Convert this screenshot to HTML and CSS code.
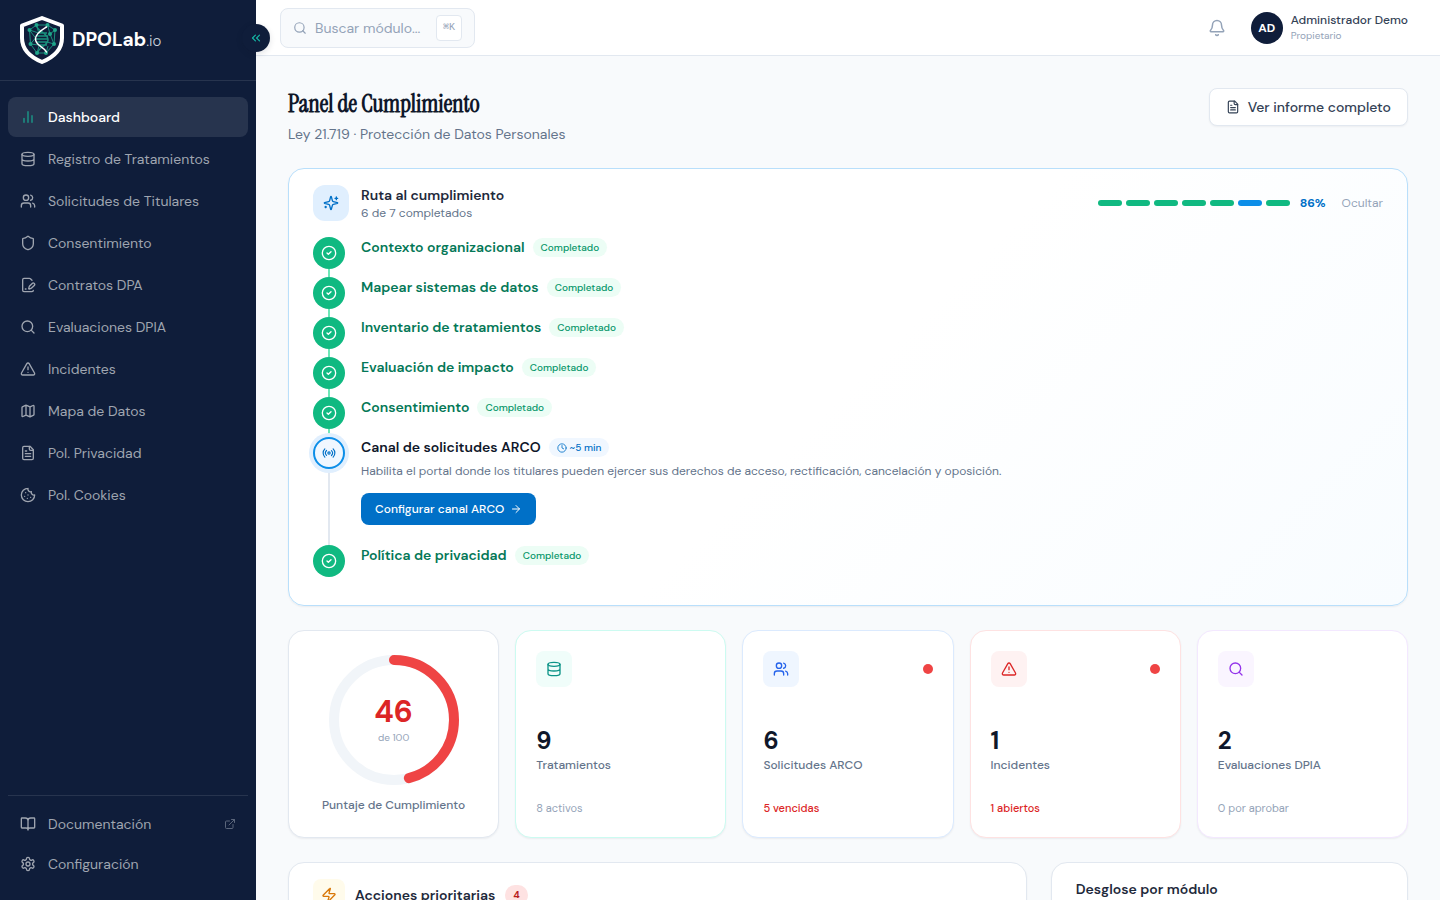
FILE: index.html
```html
<!doctype html>
<html lang="es">
<head>
    <meta charset="UTF-8">
    <meta name="viewport" content="width=device-width, initial-scale=1">
    <title>DPOLab.io - Panel de Cumplimiento</title>
    <link rel="stylesheet" href="styles.css">
</head>
<body>
<!-- icon sprite -->
<svg class="sprite" aria-hidden="true">
    <symbol id="i-chart" viewBox="0 0 24 24"><path d="M18 20V10M12 20V4M6 20v-6"/></symbol>
    <symbol id="i-database" viewBox="0 0 24 24"><ellipse cx="12" cy="5" rx="9" ry="3"/><path d="M3 5v14a9 3 0 0 0 18 0V5M3 12a9 3 0 0 0 18 0"/></symbol>
    <symbol id="i-users" viewBox="0 0 24 24"><path d="M16 21v-2a4 4 0 0 0-4-4H6a4 4 0 0 0-4 4v2"/><circle cx="9" cy="7" r="4"/><path d="M22 21v-2a4 4 0 0 0-3-3.87M16 3.13a4 4 0 0 1 0 7.75"/></symbol>
    <symbol id="i-shield" viewBox="0 0 24 24"><path d="M20 13c0 5-3.5 7.5-7.66 8.95a1 1 0 0 1-.67-.01C7.5 20.5 4 18 4 13V6a1 1 0 0 1 1-1c2 0 4.5-1.2 6.24-2.72a1.17 1.17 0 0 1 1.52 0C14.51 3.81 17 5 19 5a1 1 0 0 1 1 1z"/></symbol>
    <symbol id="i-file-pen" viewBox="0 0 24 24"><path d="m18 5-2.414-2.414A2 2 0 0 0 14.172 2H6a2 2 0 0 0-2 2v16a2 2 0 0 0 2 2h12a2 2 0 0 0 2-2"/><path d="M21.378 12.626a1 1 0 0 0-3.004-3.004l-4.01 4.012a2 2 0 0 0-.506.854l-.837 2.87a.5.5 0 0 0 .62.62l2.87-.837a2 2 0 0 0 .854-.506z"/><path d="M8 18h1"/></symbol>
    <symbol id="i-search" viewBox="0 0 24 24"><circle cx="11" cy="11" r="8"/><path d="m21 21-4.3-4.3"/></symbol>
    <symbol id="i-alert" viewBox="0 0 24 24"><path d="m21.73 18-8-14a2 2 0 0 0-3.48 0l-8 14A2 2 0 0 0 4 21h16a2 2 0 0 0 1.73-3M12 9v4M12 17h.01"/></symbol>
    <symbol id="i-map" viewBox="0 0 24 24"><path d="M14.106 5.553a2 2 0 0 0 1.788 0l3.659-1.83A1 1 0 0 1 21 4.619v12.764a1 1 0 0 1-.553.894l-4.553 2.277a2 2 0 0 1-1.788 0l-4.212-2.106a2 2 0 0 0-1.788 0l-3.659 1.83A1 1 0 0 1 3 19.381V6.618a1 1 0 0 1 .553-.894l4.553-2.277a2 2 0 0 1 1.788 0zM15 5.764v15M9 3.236v15"/></symbol>
    <symbol id="i-file" viewBox="0 0 24 24"><path d="M15 2H6a2 2 0 0 0-2 2v16a2 2 0 0 0 2 2h12a2 2 0 0 0 2-2V7Z"/><path d="M14 2v4a2 2 0 0 0 2 2h4M10 9H8M16 13H8M16 17H8"/></symbol>
    <symbol id="i-cookie" viewBox="0 0 24 24"><path d="M12 2a10 10 0 1 0 10 10 4 4 0 0 1-5-5 4 4 0 0 1-5-5M8.5 8.5v.01M16 15.5v.01M12 12v.01M11 17v.01M7 14v.01"/></symbol>
    <symbol id="i-book" viewBox="0 0 24 24"><path d="M12 7v14M3 18a1 1 0 0 1-1-1V4a1 1 0 0 1 1-1h5a4 4 0 0 1 4 4 4 4 0 0 1 4-4h5a1 1 0 0 1 1 1v13a1 1 0 0 1-1 1h-6a3 3 0 0 0-3 3 3 3 0 0 0-3-3z"/></symbol>
    <symbol id="i-settings" viewBox="0 0 24 24"><path d="M12.22 2h-.44a2 2 0 0 0-2 2v.18a2 2 0 0 1-1 1.73l-.43.25a2 2 0 0 1-2 0l-.15-.08a2 2 0 0 0-2.73.73l-.22.38a2 2 0 0 0 .73 2.73l.15.1a2 2 0 0 1 1 1.72v.51a2 2 0 0 1-1 1.74l-.15.09a2 2 0 0 0-.73 2.73l.22.38a2 2 0 0 0 2.73.73l.15-.08a2 2 0 0 1 2 0l.43.25a2 2 0 0 1 1 1.73V20a2 2 0 0 0 2 2h.44a2 2 0 0 0 2-2v-.18a2 2 0 0 1 1-1.73l.43-.25a2 2 0 0 1 2 0l.15.08a2 2 0 0 0 2.73-.73l.22-.39a2 2 0 0 0-.73-2.73l-.15-.08a2 2 0 0 1-1-1.74v-.5a2 2 0 0 1 1-1.74l.15-.09a2 2 0 0 0 .73-2.73l-.22-.38a2 2 0 0 0-2.73-.73l-.15.08a2 2 0 0 1-2 0l-.43-.25a2 2 0 0 1-1-1.73V4a2 2 0 0 0-2-2z"/><circle cx="12" cy="12" r="3"/></symbol>
    <symbol id="i-external" viewBox="0 0 24 24"><path d="M15 3h6v6M10 14 21 3M18 13v6a2 2 0 0 1-2 2H5a2 2 0 0 1-2-2V8a2 2 0 0 1 2-2h6"/></symbol>
    <symbol id="i-chevrons" viewBox="0 0 24 24"><path d="m11 17-5-5 5-5M18 17l-5-5 5-5"/></symbol>
    <symbol id="i-bell" viewBox="0 0 24 24"><path d="M10.268 21a2 2 0 0 0 3.464 0M3.262 15.326A1 1 0 0 0 4 17h16a1 1 0 0 0 .74-1.673C19.41 13.956 18 12.499 18 8A6 6 0 0 0 6 8c0 4.499-1.411 5.956-2.738 7.326"/></symbol>
    <symbol id="i-sparkles" viewBox="0 0 24 24"><path d="M9.937 15.5A2 2 0 0 0 8.5 14.063l-6.135-1.582a.5.5 0 0 1 0-.962L8.5 9.936A2 2 0 0 0 9.937 8.5l1.582-6.135a.5.5 0 0 1 .963 0L14.063 8.5A2 2 0 0 0 15.5 9.937l6.135 1.581a.5.5 0 0 1 0 .964L15.5 14.063a2 2 0 0 0-1.437 1.437l-1.582 6.135a.5.5 0 0 1-.963 0z"/><path d="M20 3v4M22 5h-4M4 17v2M5 18H3"/></symbol>
    <symbol id="i-check" viewBox="0 0 24 24"><circle cx="12" cy="12" r="10"/><path d="m9 12 2 2 4-4"/></symbol>
    <symbol id="i-radio" viewBox="0 0 24 24"><path d="M4.9 19.1C1 15.2 1 8.8 4.9 4.9M7.8 16.2c-2.3-2.3-2.3-6.1 0-8.5M16.2 7.8c2.3 2.3 2.3 6.1 0 8.5M19.1 4.9C23 8.8 23 15.1 19.1 19"/><circle cx="12" cy="12" r="2"/></symbol>
    <symbol id="i-clock" viewBox="0 0 24 24"><circle cx="12" cy="12" r="10"/><path d="M12 6v6l4 2"/></symbol>
    <symbol id="i-arrow" viewBox="0 0 24 24"><path d="M5 12h14M12 5l7 7-7 7"/></symbol>
    <symbol id="i-zap" viewBox="0 0 24 24"><path d="M4 14a1 1 0 0 1-.78-1.63l9.9-10.2a.5.5 0 0 1 .86.46l-1.92 6.02A1 1 0 0 0 13 10h7a1 1 0 0 1 .78 1.63l-9.9 10.2a.5.5 0 0 1-.86-.46l1.92-6.02A1 1 0 0 0 11 14z"/></symbol>
</svg>

<aside class="sidebar">
    <a class="brand" href="#">
        <svg class="brand-mark" viewBox="0 0 44 48">
            <path class="mark-shield" d="M22 2 42 9.500V22c0 11-8 19-20 24C10 41 2 33 2 22V9.500z"/>
            <g class="mark-net">
                <path d="M16.500 9h11L35 14l-1 14-8 9h-9l-6.500-9-1-14zM9.500 14l9 3M16.500 9l2 7M27.500 9l2.500 9 5-4M30 18l4 10M9.500 14l6 8-5 6 8 1M34 28l-7-2M17 37l2-7M26 37l2-7"/>
                <path class="mark-rungs" d="M17 11c1 4 10 6 11 12s-9 8-10 13M19 17h8M17 20h11M16 23h12M17 26h11M19 29h8"/>
            </g>
            <g class="mark-dots">
                <circle cx="16.500" cy="9" r="2"/><circle cx="27.500" cy="9" r="2"/><circle cx="9.500" cy="14" r="2"/><circle cx="35" cy="14" r="2"/>
                <circle cx="10.500" cy="28" r="2"/><circle cx="34" cy="28" r="2"/><circle cx="17" cy="37" r="2"/><circle cx="26" cy="37" r="2"/><circle cx="30" cy="18" r="2"/>
            </g>
            <path class="mark-helix" d="M26.500 11c-4 2.500-11 6-11 12 0 7 8 7 11 13"/>
        </svg>
        <span class="brand-name">DPOLab<span class="brand-tld">.io</span></span>
    </a>
    <nav class="nav">
        <a class="nav-item active" href="#"><svg class="icon"><use href="#i-chart"/></svg>Dashboard</a>
        <a class="nav-item" href="#"><svg class="icon"><use href="#i-database"/></svg>Registro de Tratamientos</a>
        <a class="nav-item" href="#"><svg class="icon"><use href="#i-users"/></svg>Solicitudes de Titulares</a>
        <a class="nav-item" href="#"><svg class="icon"><use href="#i-shield"/></svg>Consentimiento</a>
        <a class="nav-item" href="#"><svg class="icon"><use href="#i-file-pen"/></svg>Contratos DPA</a>
        <a class="nav-item" href="#"><svg class="icon"><use href="#i-search"/></svg>Evaluaciones DPIA</a>
        <a class="nav-item" href="#"><svg class="icon"><use href="#i-alert"/></svg>Incidentes</a>
        <a class="nav-item" href="#"><svg class="icon"><use href="#i-map"/></svg>Mapa de Datos</a>
        <a class="nav-item" href="#"><svg class="icon"><use href="#i-file"/></svg>Pol. Privacidad</a>
        <a class="nav-item" href="#"><svg class="icon"><use href="#i-cookie"/></svg>Pol. Cookies</a>
    </nav>
    <div class="nav-bottom">
        <a class="nav-item" href="#"><svg class="icon"><use href="#i-book"/></svg>Documentación<svg class="icon icon-12 nav-ext"><use href="#i-external"/></svg></a>
        <a class="nav-item" href="#"><svg class="icon"><use href="#i-settings"/></svg>Configuración</a>
    </div>
    <button class="collapse" type="button" aria-label="Contraer menú"><svg class="icon icon-14"><use href="#i-chevrons"/></svg></button>
</aside>

<div class="page">
    <header class="topbar">
        <label class="search">
            <svg class="icon icon-14"><use href="#i-search"/></svg>
            <input type="text" placeholder="Buscar módulo..." aria-label="Buscar módulo">
            <kbd>⌘K</kbd>
        </label>
        <div class="topbar-right">
            <button class="bell" type="button" aria-label="Notificaciones"><svg class="icon icon-18"><use href="#i-bell"/></svg></button>
            <button class="user" type="button">
                <span class="avatar">AD</span>
                <span class="user-text">
                    <span class="user-name">Administrador Demo</span>
                    <span class="user-role">Propietario</span>
                </span>
            </button>
        </div>
    </header>

    <main class="content">
        <div class="page-head">
            <div>
                <h1>Panel de Cumplimiento</h1>
                <p class="subtitle">Ley 21.719 · Protección de Datos Personales</p>
            </div>
            <button class="btn-report" type="button"><svg class="icon icon-14"><use href="#i-file"/></svg>Ver informe completo</button>
        </div>

        <section class="card journey">
            <div class="journey-head">
                <span class="tile tile-sky"><svg class="icon"><use href="#i-sparkles"/></svg></span>
                <div class="journey-title">
                    <h2>Ruta al cumplimiento</h2>
                    <p>6 de 7 completados</p>
                </div>
                <div class="segments">
                    <i></i><i></i><i></i><i></i><i></i><i class="current"></i><i></i>
                </div>
                <span class="percent">86%</span>
                <button class="hide" type="button">Ocultar</button>
            </div>
            <ol class="steps">
                <li class="step"><span class="dot"><svg class="icon"><use href="#i-check"/></svg></span><div class="step-row"><h3>Contexto organizacional</h3><span class="badge">Completado</span></div></li>
                <li class="step"><span class="dot"><svg class="icon"><use href="#i-check"/></svg></span><div class="step-row"><h3>Mapear sistemas de datos</h3><span class="badge">Completado</span></div></li>
                <li class="step"><span class="dot"><svg class="icon"><use href="#i-check"/></svg></span><div class="step-row"><h3>Inventario de tratamientos</h3><span class="badge">Completado</span></div></li>
                <li class="step"><span class="dot"><svg class="icon"><use href="#i-check"/></svg></span><div class="step-row"><h3>Evaluación de impacto</h3><span class="badge">Completado</span></div></li>
                <li class="step"><span class="dot"><svg class="icon"><use href="#i-check"/></svg></span><div class="step-row"><h3>Consentimiento</h3><span class="badge">Completado</span></div></li>
                <li class="step current">
                    <span class="dot"><svg class="icon icon-14"><use href="#i-radio"/></svg></span>
                    <div class="step-body">
                        <div class="step-row"><h3>Canal de solicitudes ARCO</h3><span class="badge badge-time"><svg class="icon icon-10"><use href="#i-clock"/></svg>~5 min</span></div>
                        <p class="step-desc">Habilita el portal donde los titulares pueden ejercer sus derechos de acceso, rectificación, cancelación y oposición.</p>
                        <button class="btn-primary" type="button">Configurar canal ARCO<svg class="icon icon-12"><use href="#i-arrow"/></svg></button>
                    </div>
                </li>
                <li class="step"><span class="dot"><svg class="icon"><use href="#i-check"/></svg></span><div class="step-row"><h3>Política de privacidad</h3><span class="badge">Completado</span></div></li>
            </ol>
        </section>

        <section class="stats">
            <div class="card score">
                <div class="ring">
                    <svg viewBox="0 0 130 130">
                        <circle class="ring-track" cx="65" cy="65" r="60"/>
                        <circle class="ring-value" cx="65" cy="65" r="60" pathLength="100" stroke-dasharray="46 100"/>
                    </svg>
                    <div class="ring-text"><strong>46</strong><span>de 100</span></div>
                </div>
                <p class="stat-label">Puntaje de Cumplimiento</p>
            </div>
            <a class="card stat stat-teal" href="#">
                <span class="stat-top"><span class="tile"><svg class="icon"><use href="#i-database"/></svg></span></span>
                <strong>9</strong>
                <span class="stat-label">Tratamientos</span>
                <span class="stat-note">8 activos</span>
            </a>
            <a class="card stat stat-blue" href="#">
                <span class="stat-top"><span class="tile"><svg class="icon"><use href="#i-users"/></svg></span><i class="alert-dot"></i></span>
                <strong>6</strong>
                <span class="stat-label">Solicitudes ARCO</span>
                <span class="stat-note urgent">5 vencidas</span>
            </a>
            <a class="card stat stat-red" href="#">
                <span class="stat-top"><span class="tile"><svg class="icon"><use href="#i-alert"/></svg></span><i class="alert-dot"></i></span>
                <strong>1</strong>
                <span class="stat-label">Incidentes</span>
                <span class="stat-note urgent">1 abiertos</span>
            </a>
            <a class="card stat stat-purple" href="#">
                <span class="stat-top"><span class="tile"><svg class="icon"><use href="#i-search"/></svg></span></span>
                <strong>2</strong>
                <span class="stat-label">Evaluaciones DPIA</span>
                <span class="stat-note">0 por aprobar</span>
            </a>
        </section>

        <div class="bottom">
            <section class="card panel panel-actions">
                <span class="tile tile-amber"><svg class="icon"><use href="#i-zap"/></svg></span>
                <h2>Acciones prioritarias</h2>
                <span class="count">4</span>
            </section>
            <section class="card panel">
                <h2>Desglose por módulo</h2>
            </section>
        </div>
    </main>
</div>
</body>
</html>
```

FILE: styles.css
```css
* {
    box-sizing: border-box;
}
body {
    margin: 0;
    display: flex;
    height: 100vh;
    overflow: hidden;
    background: #f8fafc;
    color: #0f172a;
    font-family: "DM Sans", Inter, "Liberation Sans", sans-serif;
    font-size: 14px;
    line-height: 20px;
}
h1, h2, h3, p, ol {
    margin: 0;
    padding: 0;
}
a {
    color: inherit;
    text-decoration: none;
}
button {
    font: inherit;
    border: 0;
    padding: 0;
    background: none;
    cursor: pointer;
}
.sprite {
    position: absolute;
    width: 0;
    height: 0;
}
.icon {
    width: 16px;
    height: 16px;
    flex: none;
    fill: none;
    stroke: currentColor;
    stroke-width: 2;
    stroke-linecap: round;
    stroke-linejoin: round;
}
.icon-10 { width: 10px; height: 10px; }
.icon-12 { width: 12px; height: 12px; }
.icon-14 { width: 14px; height: 14px; }
.icon-18 { width: 18px; height: 18px; }

/* sidebar */
.sidebar {
    position: relative;
    z-index: 2;
    display: flex;
    flex-direction: column;
    flex: none;
    width: 256px;
    background: #0f1d3a;
}
.brand {
    display: flex;
    align-items: center;
    gap: 8px;
    height: 81px;
    padding: 0 20px;
    border-bottom: 1px solid #27344e;
    color: #fff;
}
.brand-mark {
    width: 44px;
    height: 48px;
    fill: none;
}
.mark-shield {
    fill: #0f1d3a;
    stroke: #fff;
    stroke-width: 4;
    stroke-linejoin: round;
}
.mark-net {
    stroke: #1a8f7c;
    stroke-width: 1;
}
.mark-rungs {
    stroke-width: 1.5;
}
.mark-dots {
    fill: #1fa58a;
}
.mark-helix {
    stroke: #fff;
    stroke-width: 1.5;
    stroke-linecap: round;
}
.brand-name {
    font-size: 19px;
    font-weight: 700;
}
.brand-tld {
    font-size: 15px;
    font-weight: 300;
    color: #cbd2dd;
}
.nav {
    flex: 1;
    display: flex;
    flex-direction: column;
    gap: 2px;
    padding: 16px 8px;
}
.nav-item {
    display: flex;
    align-items: center;
    gap: 12px;
    height: 40px;
    padding: 0 12px;
    border-radius: 8px;
    color: #9fa5b0;
}
.nav-item.active {
    background: #27344e;
    color: #fff;
    font-weight: 500;
}
.nav-item.active .icon {
    color: #1a9e8c;
}
.nav-bottom {
    margin: 0 8px;
    padding: 8px 0 16px;
    border-top: 1px solid #27344e;
}
.nav-ext {
    margin-left: auto;
    color: #5b667b;
}
.collapse {
    position: absolute;
    top: 24px;
    right: -14px;
    display: flex;
    align-items: center;
    justify-content: center;
    width: 28px;
    height: 28px;
    border-radius: 50%;
    background: #0f1d3a;
    color: #14b8a6;
    box-shadow: 0 2px 6px rgba(15, 23, 42, .12);
}

/* top bar */
.page {
    flex: 1;
    min-width: 0;
    display: flex;
    flex-direction: column;
}
.topbar {
    display: flex;
    align-items: center;
    justify-content: space-between;
    flex: none;
    height: 56px;
    padding: 0 32px 0 24px;
    background: #fff;
    border-bottom: 1px solid #e2e8f0;
}
.search {
    display: flex;
    align-items: center;
    gap: 8px;
    width: 195px;
    height: 40px;
    padding: 0 12px;
    border: 1px solid #e2e8f0;
    border-radius: 8px;
    background: #f8fafc;
    color: #94a3b8;
}
.search input {
    flex: 1;
    min-width: 0;
    padding: 0;
    border: 0;
    outline: 0;
    background: none;
    font: inherit;
}
.search input::placeholder {
    color: #94a3b8;
}
kbd {
    width: 26px;
    border: 1px solid #e2e8f0;
    border-radius: 4px;
    background: #fff;
    font: 10px/24px "Liberation Mono", monospace;
    text-align: center;
}
.topbar-right {
    display: flex;
    align-items: center;
    gap: 25px;
}
.bell {
    display: flex;
    color: #94a3b8;
}
.user {
    display: flex;
    align-items: center;
    gap: 8px;
    text-align: left;
}
.avatar {
    width: 32px;
    border-radius: 50%;
    background: #0f1d3a;
    color: #fff;
    font-size: 12px;
    font-weight: 700;
    line-height: 32px;
    text-align: center;
}
.user-text {
    display: flex;
    flex-direction: column;
}
.user-name {
    color: #334155;
    font-size: 12px;
    font-weight: 500;
    line-height: 16px;
}
.user-role {
    color: #94a3b8;
    font-size: 10px;
    line-height: 16px;
}

/* content */
.content {
    flex: 1;
    display: flex;
    flex-direction: column;
    gap: 24px;
    padding: 32px;
    overflow-y: auto;
    scrollbar-width: none;
}
.content > * {
    flex: none;
}
.page-head {
    display: flex;
    align-items: flex-start;
    justify-content: space-between;
}
h1 {
    font-family: "Instrument Serif", "Liberation Serif", serif;
    font-size: 24px;
    line-height: 32px;
}
.subtitle {
    margin-top: 4px;
    color: #64748b;
}
.btn-report {
    display: flex;
    align-items: center;
    gap: 8px;
    height: 38px;
    padding: 0 16px;
    border: 1px solid #e2e8f0;
    border-radius: 8px;
    background: #fff;
    color: #334155;
    font-weight: 500;
    box-shadow: 0 1px 2px rgba(15, 23, 42, .05);
}
.card {
    border: 1px solid #e2e8f0;
    border-radius: 16px;
    background: #fff;
    box-shadow: 0 1px 2px rgba(15, 23, 42, .06);
}
h2, h3 {
    font-size: 14px;
    font-weight: 600;
    line-height: 20px;
}
h2 {
    color: #1e293b;
}
.tile {
    display: flex;
    align-items: center;
    justify-content: center;
    width: 36px;
    height: 36px;
    border-radius: 8px;
}

/* journey */
.journey {
    padding: 16px 24px 20px;
    border-color: #b9dffb;
    background: linear-gradient(135deg, #fff 50%, #f8fcff);
}
.journey-head {
    display: flex;
    align-items: center;
    margin-bottom: 16px;
}
.tile-sky {
    border-radius: 12px;
    background: #e0effe;
    color: #0070c7;
}
.journey-title {
    flex: 1;
    margin-left: 12px;
}
.journey-title p {
    color: #64748b;
    font-size: 12px;
    line-height: 16px;
}
.segments {
    display: flex;
    gap: 4px;
    margin-right: 10px;
}
.segments i {
    width: 24px;
    height: 6px;
    border-radius: 3px;
    background: #10b981;
}
.segments .current {
    background: #0c8ee8;
}
.percent {
    color: #0070c7;
    font-size: 12px;
    font-weight: 700;
}
.hide {
    margin-left: 16px;
    color: #94a3b8;
    font-size: 12px;
}
.steps {
    list-style: none;
}
.step {
    position: relative;
    display: flex;
    align-items: flex-start;
    gap: 16px;
    min-height: 40px;
}
/* connector down to the next step */
.step:not(:last-child)::before {
    content: "";
    position: absolute;
    top: 32px;
    bottom: 0;
    left: 15px;
    width: 2px;
    background: #6ee7b7;
}
.step.current::before {
    background: #e2e8f0 !important;
}
.dot {
    position: relative;
    display: flex;
    align-items: center;
    justify-content: center;
    flex: none;
    width: 32px;
    height: 32px;
    border-radius: 50%;
    background: #10b981;
    color: #fff;
}
.current .dot {
    border: 2px solid #0c8ee8;
    background: #f0f7ff;
    color: #0070c7;
    box-shadow: 0 0 0 4px #e0effe;
}
.step-row {
    display: flex;
    align-items: flex-end;
    gap: 8px;
    height: 20px;
}
h3 {
    color: #047857;
}
.current h3 {
    color: #0f172a;
}
.badge {
    display: flex;
    align-items: center;
    gap: 3px;
    height: 19px;
    padding: 0 8px;
    border-radius: 10px;
    background: #ecfdf5;
    color: #059669;
    font-size: 10px;
    font-weight: 500;
}
.badge-time {
    background: #f0f7ff;
    color: #0070c7;
}
.step-body {
    padding-bottom: 20px;
}
.step-desc {
    margin: 4px 0 12px;
    color: #64748b;
    font-size: 12px;
}
.btn-primary {
    display: flex;
    align-items: center;
    gap: 6px;
    height: 32px;
    padding: 0 14px;
    border-radius: 8px;
    background: #0070c7;
    color: #fff;
    font-size: 12px;
    font-weight: 500;
}

/* stats */
.stats {
    display: grid;
    grid-template-columns: repeat(5, 1fr);
    gap: 16px;
}
.score {
    display: flex;
    flex-direction: column;
    align-items: center;
    gap: 12px;
    padding: 24px 0;
}
.ring {
    display: grid;
    width: 130px;
    height: 130px;
}
.ring > * {
    grid-area: 1 / 1;
}
.ring circle {
    fill: none;
    stroke-width: 10;
}
.ring-track {
    stroke: #f1f5f9;
}
.ring-value {
    stroke: #ef4444;
    stroke-linecap: round;
    transform: rotate(-90deg);
    transform-origin: center;
}
.ring-text {
    display: flex;
    flex-direction: column;
    align-items: center;
    justify-content: center;
}
.ring-text strong {
    color: #dc2626;
    font-size: 30px;
    line-height: 36px;
}
.ring-text span {
    color: #94a3b8;
    font-size: 10px;
    line-height: 16px;
}
.stat {
    display: flex;
    flex-direction: column;
    padding: 20px;
}
.stat-top {
    display: flex;
    align-items: center;
    justify-content: space-between;
    margin-bottom: 38px;
}
.alert-dot {
    width: 10px;
    height: 10px;
    border-radius: 50%;
    background: #ef4444;
}
.stat strong {
    font-size: 24px;
    line-height: 32px;
}
.stat-label {
    color: #64748b;
    font-size: 12px;
    font-weight: 500;
    line-height: 16px;
}
.stat-note {
    margin-top: 28px;
    color: #94a3b8;
    font-size: 11px;
    line-height: 14px;
}
.urgent {
    color: #dc2626;
    font-weight: 500;
}
.stat-teal { border-color: #ccfbf1; }
.stat-teal .tile { background: #f0fdfa; color: #0d9488; }
.stat-blue { border-color: #dbeafe; }
.stat-blue .tile { background: #eff6ff; color: #2563eb; }
.stat-red { border-color: #fee2e2; }
.stat-red .tile { background: #fef2f2; color: #dc2626; }
.stat-purple { border-color: #f3e8ff; }
.stat-purple .tile { background: #faf5ff; color: #9333ea; }

/* bottom panels */
.bottom {
    display: grid;
    grid-template-columns: repeat(3, 1fr);
    gap: 24px;
}
.panel {
    min-height: 240px;
    padding: 16px 24px;
}
.panel-actions {
    grid-column: span 2;
    display: flex;
    align-items: flex-start;
    gap: 10px;
}
.panel-actions h2 {
    line-height: 32px;
}
.tile-amber {
    width: 32px;
    height: 32px;
    background: #fffbeb;
    color: #d97706;
}
.count {
    margin-top: 6px;
    padding: 0 8px;
    border-radius: 10px;
    background: #fee2e2;
    color: #b91c1c;
    font-size: 10px;
    font-weight: 700;
    line-height: 20px;
}
```
